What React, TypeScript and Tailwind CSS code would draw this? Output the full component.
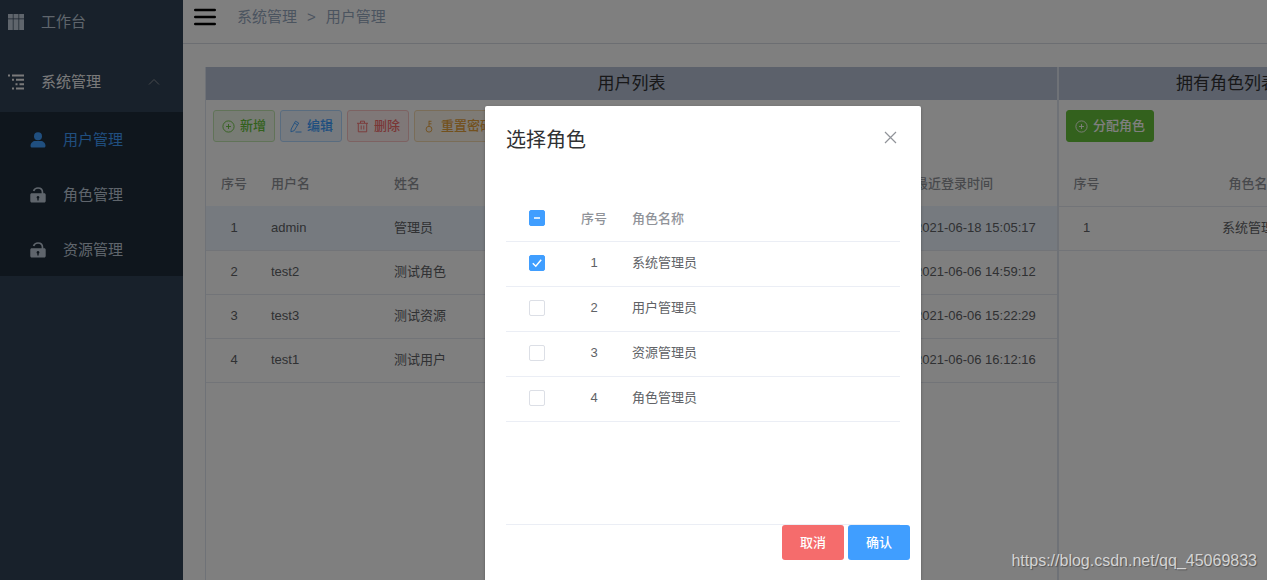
import React from "react";

const users = [
  { name: "admin", nick: "管理员", time: "2021-06-18 15:05:17" },
  { name: "test2", nick: "测试角色", time: "2021-06-06 14:59:12" },
  { name: "test3", nick: "测试资源", time: "2021-06-06 15:22:29" },
  { name: "test1", nick: "测试用户", time: "2021-06-06 16:12:16" },
];

const roles = ["系统管理员", "用户管理员", "资源管理员", "角色管理员"];

const GridIcon = () => (
  <svg width="16" height="16" viewBox="0 0 16 16" fill="currentColor">
    <path d="M0 0h4.800v4.500H0zM5.500 0h5v4.500h-5zM11.200 0H16v4.500h-4.800zM0 5.200h4.800V16H0zM5.500 5.200h5V16h-5zM11.200 5.200H16V16h-4.800z" />
  </svg>
);

const TreeIcon = () => (
  <svg width="16" height="16" viewBox="0 0 16 16" fill="currentColor">
    <path d="M0 .5h2v2H0zM4 .5h12v2H4zM4 4.800h2v2H4zM8 4.800h8v2H8zM7.500 9.200h2v2h-2zM11.500 9.200H16v2h-4.500zM4 13.500h2v2H4zM8 13.500h8v2H8z" />
  </svg>
);

const UserIcon = () => (
  <svg width="16" height="16" viewBox="0 0 16 16" fill="currentColor">
    <circle cx="8" cy="4.300" r="4" />
    <path d="M.5 14c0-3 2.300-5 5-5h5c2.700 0 5 2 5 5 0 .9-.6 1.500-1.500 1.500H2C1.100 15.500.5 14.900.5 14z" />
  </svg>
);

const LockIcon = () => (
  <svg width="16" height="16" viewBox="0 0 16 16">
    <path
      d="M3.600 4C4.300 2 5.900 1 8 1c2.700 0 4.500 1.800 4.500 4.400v1.500"
      fill="none"
      stroke="currentColor"
      strokeWidth="1.700"
    />
    <path
      fillRule="evenodd"
      fill="currentColor"
      d="M1.800 6.200h12.400c.9 0 1.500.6 1.500 1.500V14c0 .9-.6 1.500-1.500 1.500H1.800C.9 15.500.3 14.900.3 14V7.700c0-.9.6-1.500 1.500-1.500zM8 9a1.400 1.400 0 0 0-.7 2.600V13.500h1.400v-1.900A1.400 1.400 0 0 0 8 9z"
    />
  </svg>
);

const PlusIcon = () => (
  <svg width="13" height="13" viewBox="0 0 13 13" fill="none" stroke="currentColor" strokeWidth="0.900">
    <circle cx="6.500" cy="6.500" r="5.600" />
    <path d="M4 6.500h5M6.500 4v5" />
  </svg>
);

const EditIcon = () => (
  <svg width="13" height="13" viewBox="0 0 13 13" fill="none" stroke="currentColor" strokeWidth="0.900" strokeLinejoin="round">
    <path d="M6.500 1.200l3.200 1.800-4.500 7.700-3.300 1.100.3-2.800zM5.400 3.100l3.200 1.800M6.500 12h6" />
  </svg>
);

const TrashIcon = () => (
  <svg width="13" height="13" viewBox="0 0 13 13" fill="none" stroke="currentColor" strokeWidth="0.900">
    <path d="M1 3.300h11M4.500 3V1.200h4V3M2.300 3.500v8.300h8.400V3.500M5.200 5.500v4M7.800 5.500v4" />
  </svg>
);

const KeyIcon = () => (
  <svg width="13" height="13" viewBox="0 0 13 13" fill="none" stroke="currentColor" strokeWidth="0.900">
    <circle cx="6" cy="9.200" r="2.900" />
    <path d="M6 6.300V.8M6 1.300h2.500M6 3.800h2.500" />
  </svg>
);

const submenu = [
  { label: "用户管理", icon: <UserIcon />, color: "text-[#409eff]" },
  { label: "角色管理", icon: <LockIcon />, color: "text-[#bfcbd9]" },
  { label: "资源管理", icon: <LockIcon />, color: "text-[#bfcbd9]" },
];

const tools = [
  { label: "新增", icon: <PlusIcon />, style: "text-[#67c23a] bg-[#f0f9eb] border-[#c2e7b0]" },
  { label: "编辑", icon: <EditIcon />, style: "text-[#409eff] bg-[#ecf5ff] border-[#b3d8ff]" },
  { label: "删除", icon: <TrashIcon />, style: "text-[#f56c6c] bg-[#fef0f0] border-[#fbc4c4]" },
  { label: "重置密码", icon: <KeyIcon />, style: "text-[#e6a23c] bg-[#fdf6ec] border-[#f5dab1]" },
];

const Sidebar = () => {
  return (
    <aside className="w-[183px] shrink-0 overflow-hidden bg-[#304357] text-[15px]">
      <nav className="-mt-2">
        <a href="#" className="flex h-[60px] items-center gap-[17px] pl-2 text-[#bfcbd9]">
          <GridIcon />
          工作台
        </a>
        <button className="flex h-[60px] w-full items-center gap-[17px] pl-2 pr-[23px] text-[#f4f4f5]">
          <TreeIcon />
          系统管理
          <svg className="ml-auto text-[#909399]" width="12" height="12" viewBox="0 0 12 12" fill="none" stroke="currentColor">
            <path d="M1 8.500l5-5 5 5" />
          </svg>
        </button>
        <div className="flex flex-col gap-px bg-[#1f2d3a]">
          {submenu.map((item) => (
            <a
              key={item.label}
              href="#"
              className={`flex h-[54px] items-center gap-[17px] pl-[30px] pt-[2px] ${item.color}`}
            >
              {item.icon}
              {item.label}
            </a>
          ))}
        </div>
      </nav>
    </aside>
  );
};

const Topbar = () => {
  return (
    <header className="border-b border-[#d8dce5] pb-[9px]">
      <div className="flex h-[34px] items-center pl-[11px]">
        <button aria-label="菜单" className="text-black">
          <svg width="22" height="18" viewBox="0 0 22 18" stroke="currentColor" strokeWidth="2.400" strokeLinecap="round">
            <path d="M1.200 2h19.600M1.200 9h19.600M1.200 16h19.600" />
          </svg>
        </button>
        <div className="ml-[21px] flex gap-[10px] pt-px text-[15px] text-[#97a8be]">
          <a href="#">系统管理</a>
          <span>&gt;</span>
          <span>用户管理</span>
        </div>
      </div>
    </header>
  );
};

const UserPanel = () => {
  return (
    <section className="min-w-0 flex-1 border-x border-[#dfe4ee]">
      <h2 className="flex h-[33px] items-center justify-center bg-[#b8c2d6] text-[17px] text-[#303133]">
        用户列表
      </h2>
      <div className="flex gap-[5px] px-[7px] pb-5 pt-[10px]">
        {tools.map((tool) => (
          <button
            key={tool.label}
            className={`flex h-8 items-center gap-[5px] rounded-[3px] border px-2 text-[13px] font-medium ${tool.style}`}
          >
            {tool.icon}
            {tool.label}
          </button>
        ))}
      </div>
      <table className="w-full table-fixed text-left text-[13px] text-[#606266]">
        <thead>
          <tr className="h-11 text-[#909399]">
            <th className="w-14 text-center font-medium">序号</th>
            <th className="w-[123px] pl-[9px] font-medium">用户名</th>
            <th className="pl-[9px] font-medium">姓名</th>
            <th className="w-[151px] pl-[9px] font-medium">最近登录时间</th>
          </tr>
        </thead>
        <tbody>
          {users.map((user, i) => (
            <tr key={user.name} className="h-11 border-b border-[#e4e8f0] first:bg-[#ecf5ff]">
              <td className="text-center">{i + 1}</td>
              <td className="pl-[9px]">{user.name}</td>
              <td className="pl-[9px]">{user.nick}</td>
              <td className="whitespace-nowrap pl-[9px]">{user.time}</td>
            </tr>
          ))}
        </tbody>
      </table>
    </section>
  );
};

const RolePanel = () => {
  return (
    <section className="-mr-32 w-[337px] shrink-0 border-l border-[#dfe4ee]">
      <h2 className="flex h-[33px] items-center justify-center bg-[#b8c2d6] text-[17px] text-[#303133]">
        拥有角色列表
      </h2>
      <div className="px-[7px] pb-5 pt-[10px]">
        <button className="flex h-8 items-center gap-[5px] rounded-[3px] border border-[#67c23a] bg-[#67c23a] px-2 text-[13px] font-medium text-white">
          <PlusIcon />
          分配角色
        </button>
      </div>
      <table className="w-full table-fixed text-center text-[13px] text-[#606266]">
        <thead>
          <tr className="h-11 border-b border-[#e4e8f0] text-[#909399]">
            <th className="w-[55px] font-medium">序号</th>
            <th className="font-medium">角色名称</th>
          </tr>
        </thead>
        <tbody>
          <tr className="h-11 border-b border-[#e4e8f0]">
            <td>1</td>
            <td>系统管理员</td>
          </tr>
        </tbody>
      </table>
    </section>
  );
};

type CheckProps = { label: string; checked?: boolean; partial?: boolean };

const Check = ({ label, checked, partial }: CheckProps) => {
  return (
    <label className="mx-auto grid size-4 place-items-center">
      <input
        type="checkbox"
        aria-label={label}
        defaultChecked={checked || partial}
        className="col-start-1 row-start-1 size-4 appearance-none rounded-[2px] border border-[#dcdfe6] bg-white checked:border-[#409eff] checked:bg-[#409eff]"
      />
      <svg
        className="pointer-events-none col-start-1 row-start-1"
        width="16"
        height="16"
        viewBox="0 0 16 16"
        fill="none"
        stroke="white"
        strokeWidth="1.500"
      >
        {partial ? <path d="M5 8h6" /> : checked ? <path d="M3.800 8.200l3 3 5.400-6.500" /> : null}
      </svg>
    </label>
  );
};

const RoleDialog = () => {
  return (
    <div
      role="dialog"
      aria-label="选择角色"
      className="ml-[485px] mt-[106px] flex w-[436px] flex-col rounded-t-[2px] bg-white shadow-[0_1px_3px_rgba(0,0,0,0.3)]"
    >
      <div className="flex items-start justify-between pl-[21px] pr-6 pt-5">
        <h1 className="text-[20px] leading-7 text-[#303133]">选择角色</h1>
        <button aria-label="关闭" className="mt-[5px] text-[#909399]">
          <svg width="13" height="13" viewBox="0 0 13 13" stroke="currentColor" strokeWidth="1.200">
            <path d="M1 1l11 11M12 1L1 12" />
          </svg>
        </button>
      </div>
      <div className="mx-[21px] mt-[42px] h-[329px] border-b border-[#ebeef5]">
        <table className="w-full table-fixed text-left text-[13px] text-[#606266]">
          <thead>
            <tr className="h-[45px] border-b border-[#ebeef5] text-[#909399]">
              <th className="w-[62px]">
                <Check label="全选" partial />
              </th>
              <th className="w-[52px] text-center font-medium">序号</th>
              <th className="pl-3 font-medium">角色名称</th>
            </tr>
          </thead>
          <tbody>
            {roles.map((role, i) => (
              <tr key={role} className="h-[45px] border-b border-[#ebeef5]">
                <td className="pb-[2px]">
                  <Check label={role} checked={i === 0} />
                </td>
                <td className="pb-[2px] text-center">{i + 1}</td>
                <td className="pb-[2px] pl-3">{role}</td>
              </tr>
            ))}
          </tbody>
        </table>
      </div>
      <div className="flex justify-end gap-1 pr-[11px] text-[13px] font-medium text-white">
        <button className="h-[35px] rounded-[3px] bg-[#f56c6c] px-[18px]">取消</button>
        <button className="h-[35px] rounded-[3px] bg-[#409eff] px-[18px]">确认</button>
      </div>
    </div>
  );
};

const App = () => {
  return (
    <div className="relative flex h-screen overflow-hidden bg-white font-['Liberation_Sans','Noto_Sans_CJK_SC',sans-serif]">
      <Sidebar />
      <main className="flex min-w-0 flex-1 flex-col">
        <Topbar />
        <div className="flex flex-1 overflow-hidden pl-[22px] pt-[23px]">
          <UserPanel />
          <RolePanel />
        </div>
      </main>
      <div className="absolute inset-0 flex bg-black/50">
        <RoleDialog />
      </div>
      <p className="absolute bottom-[7px] right-[10px] text-[16px] text-[#d4d4d4] [text-shadow:1px_1px_1px_rgba(0,0,0,0.35)]">
        https://blog.csdn.net/qq_45069833
      </p>
    </div>
  );
};

export default App;
